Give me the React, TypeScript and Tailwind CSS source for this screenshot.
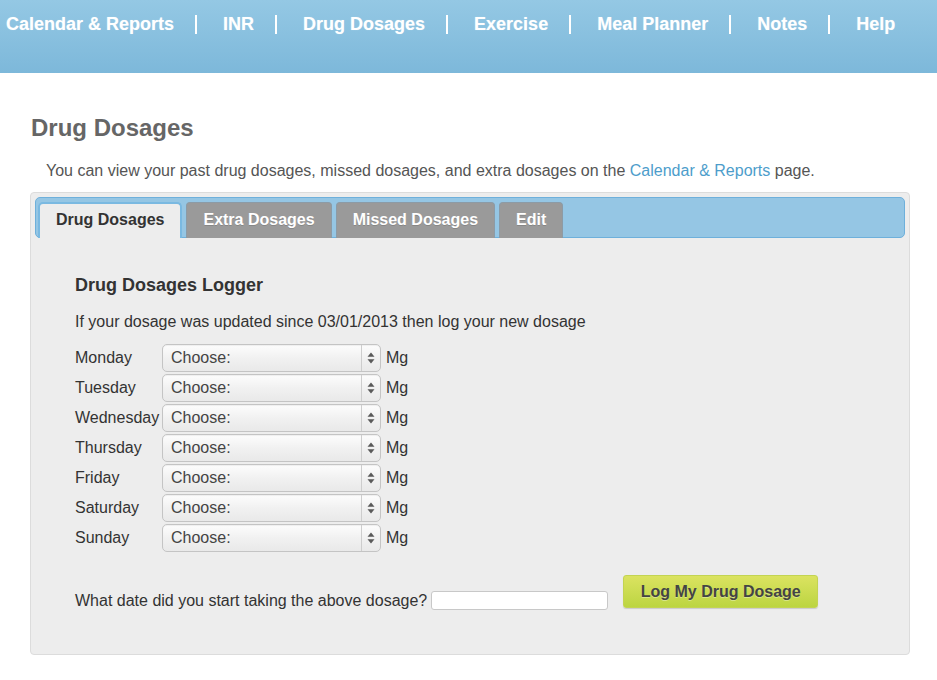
import React from "react";

const navItems = ["Calendar & Reports", "INR", "Drug Dosages", "Exercise", "Meal Planner", "Notes", "Help"];
const days = ["Monday", "Tuesday", "Wednesday", "Thursday", "Friday", "Saturday", "Sunday"];
const tabs = ["Extra Dosages", "Missed Dosages", "Edit"];

function Arrows() {
  return (
    <svg width="8" height="12" viewBox="0 0 8 12" className="block">
      <path d="M4 0.5 L7.5 4.8 L0.5 4.8 Z" fill="#5a5a5a" />
      <path d="M4 11.5 L7.5 7.2 L0.5 7.2 Z" fill="#5a5a5a" />
    </svg>
  );
}

function DaySelect() {
  return (
    <div className="flex h-[28px] w-[219px] items-stretch rounded-[5px] border border-[#c4c4c4] bg-gradient-to-b from-[#fdfdfd] via-[#f1f1f1] to-[#e9e9e9] shadow-[inset_0_1px_1px_rgba(0,0,0,0.06)]">
      <div className="flex flex-1 items-center pl-[8px] text-[16px] leading-6 text-[#444]">Choose:</div>
      <div className="flex w-[19px] items-center justify-center border-l border-[#cdcdcd]">
        <Arrows />
      </div>
    </div>
  );
}

export default function App() {
  return (
    <div className="min-h-[680px] w-[937px] bg-white font-['Liberation_Sans',Arial,sans-serif]">
      <header className="h-[73px] bg-gradient-to-b from-[#94c8e4] to-[#7db8da]">
        <nav className="flex items-center pl-[6px] pt-[12px]">
          {navItems.map((item, i) => (
            <React.Fragment key={item}>
              {i > 0 && <span className="ml-[21px] mr-[26px] h-[19px] w-[2px] bg-white" />}
              <span className="text-[18px] font-bold leading-6 text-white [text-shadow:0_0_1px_rgba(255,255,255,0.4)]">
                {item}
              </span>
            </React.Fragment>
          ))}
        </nav>
      </header>

      <main className="px-[30px]">
        <h1 className="mt-[39px] pl-[1px] text-[24px] font-bold leading-8 text-[#666]">Drug Dosages</h1>
        <p className="mt-[15px] pl-[16px] text-[16px] leading-6 text-[#555]">
          You can view your past drug dosages, missed dosages, and extra dosages on the{" "}
          <span className="text-[#4d9dcb]">Calendar &amp; Reports</span> page.
        </p>

        <section className="mt-[9px] w-[880px] rounded-[4px] border border-[#dcdcdc] bg-[#ededed] p-[4px]">
          <div className="flex h-[41px] items-end gap-[4px] rounded-[5px] border border-[#6eb0db] bg-[#95c6e4] pl-[2px]">
            <div className="-mb-[1px] h-[36px] rounded-t-[5px] border-2 border-b-0 border-[#7ab9e1] bg-[#ededed] px-4 pt-[4px] text-[16px] font-bold leading-6 text-[#333]">
              Drug Dosages
            </div>
            {tabs.map((t) => (
              <div
                key={t}
                className="-mb-[1px] h-[36px] rounded-t-[4px] border border-b-0 border-[#8c9ba6] bg-[#9a9a9a] px-4 pt-[5px] text-[16px] font-bold leading-6 text-white [text-shadow:0_1px_0_rgba(0,0,0,0.15)]"
              >
                {t}
              </div>
            ))}
          </div>

          <div className="pb-[37px] pl-[40px] text-[#333]">
            <h2 className="mt-[35px] text-[18px] font-bold leading-6 text-[#333]">Drug Dosages Logger</h2>
            <p className="mt-[13px] text-[16px] leading-6">
              If your dosage was updated since 03/01/2013 then log your new dosage
            </p>

            <div className="mt-[10px] flex flex-col gap-[2px]">
              {days.map((d) => (
                <div key={d} className="flex h-[28px] items-center">
                  <span className="w-[87px] text-[16px] leading-6">{d}</span>
                  <DaySelect />
                  <span className="ml-[5px] text-[16px] leading-6">Mg</span>
                </div>
              ))}
            </div>

            <div className="mt-[23px] flex items-start">
              <span className="mt-[14px] text-[16px] leading-6">What date did you start taking the above dosage?</span>
              <div className="ml-[4px] mt-[16px] h-[19px] w-[177px] rounded-[3px] border border-[#c8c8c8] bg-white" />
              <button className="ml-[15px] h-[33px] w-[195px] rounded-[3px] border border-[#c3d452] bg-gradient-to-b from-[#dbe360] to-[#bcd541] text-[16px] font-bold leading-6 text-[#444] shadow-[0_1px_1px_rgba(0,0,0,0.15)] [text-shadow:0_1px_0_rgba(255,255,255,0.35)]">
                Log My Drug Dosage
              </button>
            </div>
          </div>
        </section>
      </main>
    </div>
  );
}
